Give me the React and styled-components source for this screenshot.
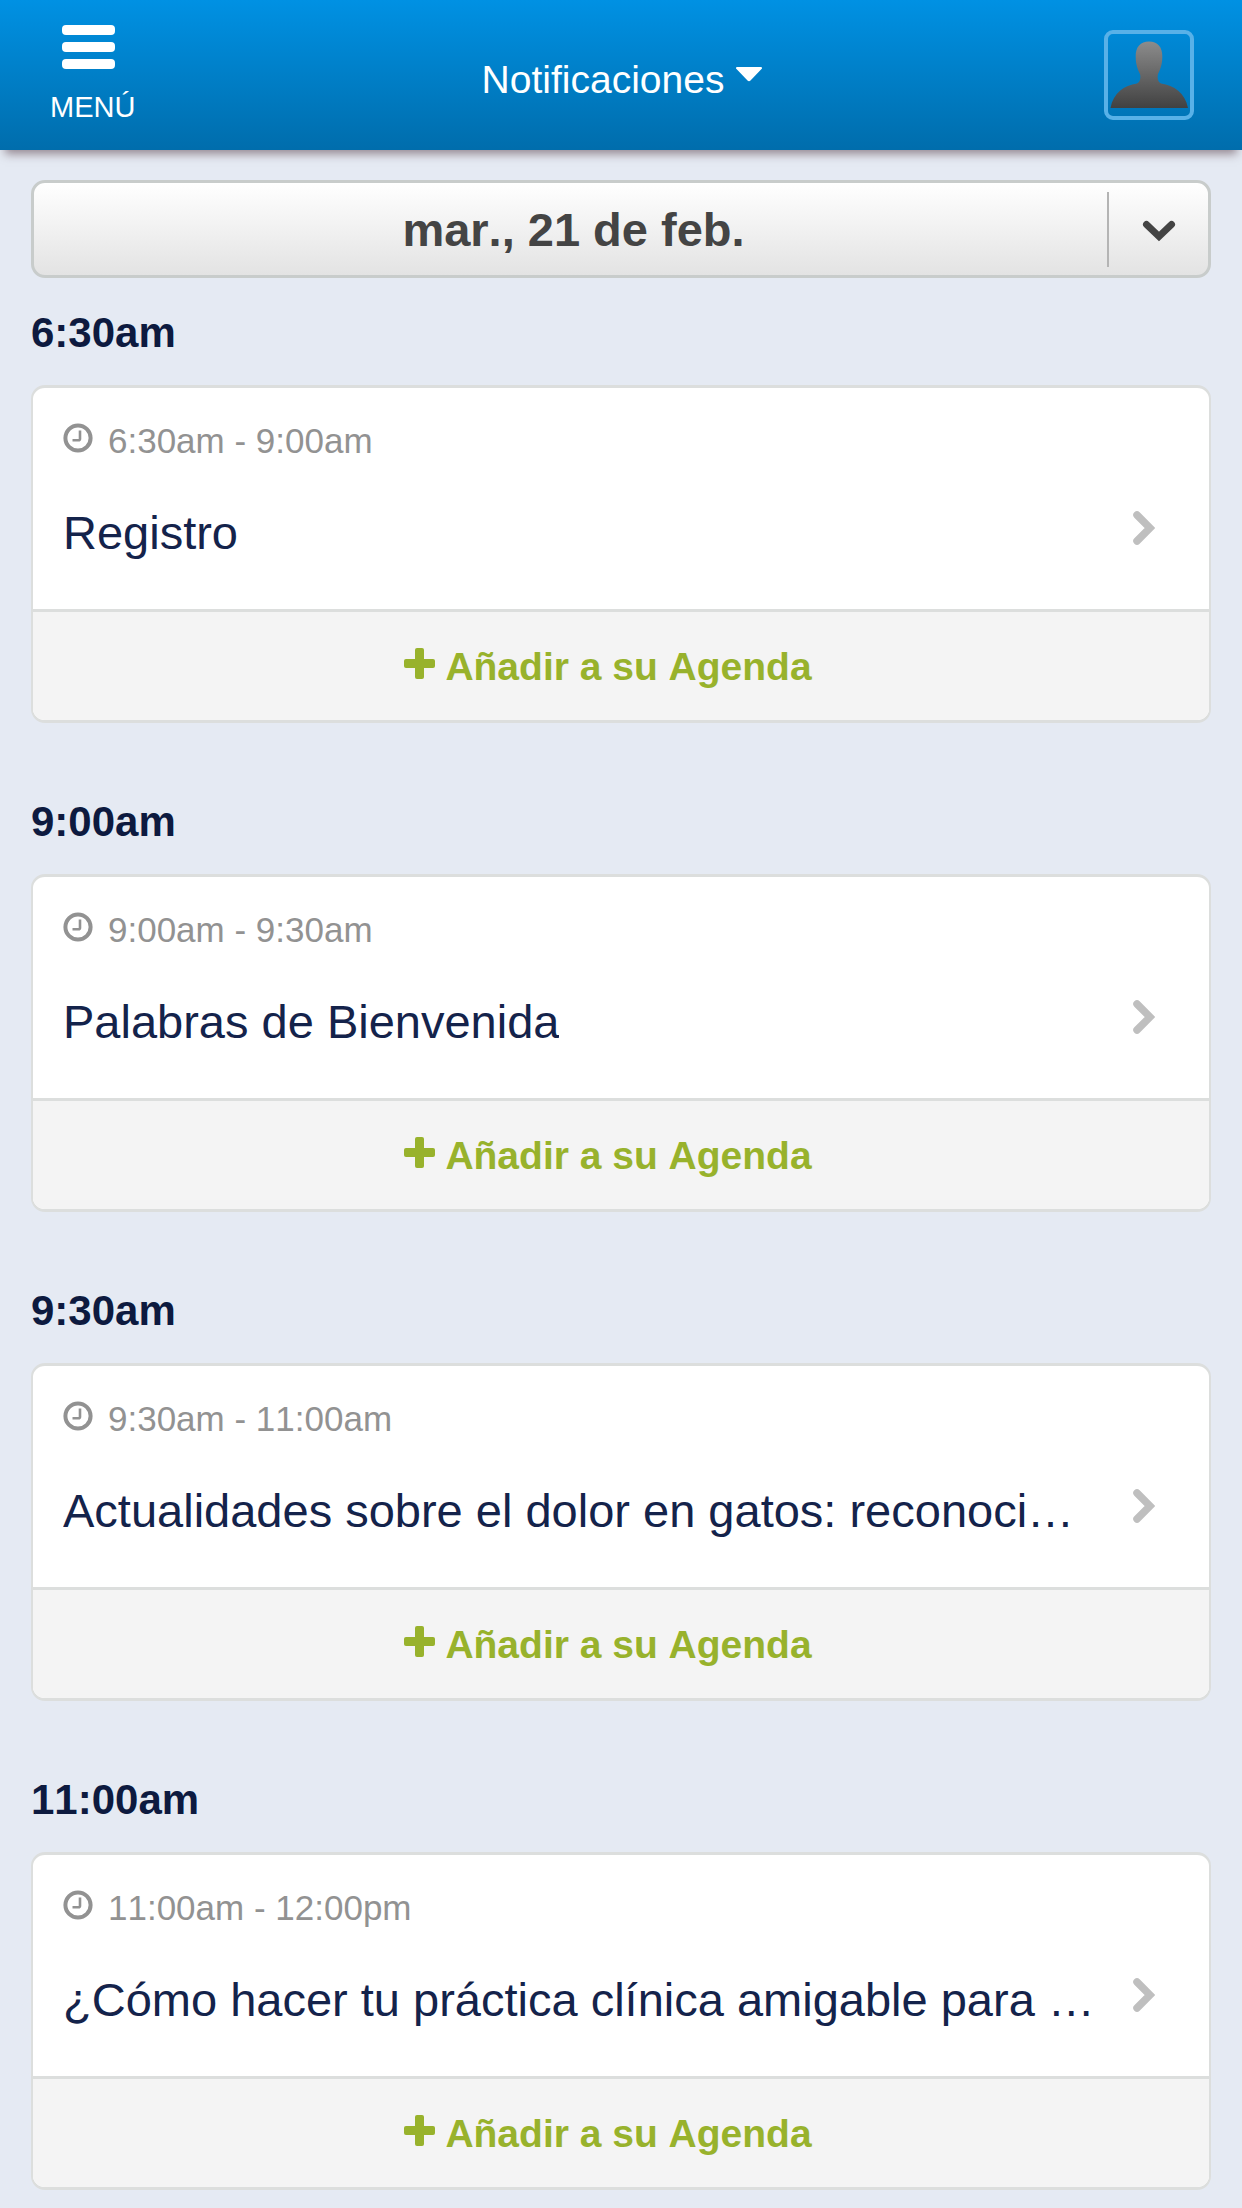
import React from "react";
import styled, { createGlobalStyle } from "styled-components";

const GlobalStyle = createGlobalStyle`
  *, *::before, *::after { box-sizing: border-box; }
  body {
    margin: 0;
    background: #e5eaf3;
    font-family: "Liberation Sans", Arial, Helvetica, sans-serif;
    font-kerning: none;
  }
  button, select { font: inherit; font-kerning: inherit; color: inherit; }
`;

const TopBar = styled.header`
  display: grid;
  grid-template-columns: 1fr auto 1fr;
  align-items: center;
  min-height: 150px;
  padding: 0 48px 0 50px;
  color: #fff;
  background: linear-gradient(#0091e3, #006dac);
  box-shadow: 0 9px 9px -5px rgba(70, 40, 50, 0.5);
`;

const MenuButton = styled.button`
  justify-self: start;
  display: flex;
  flex-direction: column;
  gap: 20px;
  padding: 0;
  border: 0;
  background: none;
  font-size: 29px;
  line-height: 36px;
  cursor: pointer;
`;

const MenuIcon = styled.svg`
  display: block;
  width: 53px;
  height: 44px;
  margin-left: 12px;
`;

const NotificationsButton = styled.button`
  display: flex;
  align-items: flex-start;
  gap: 12px;
  padding: 10px 0 0;
  border: 0;
  background: none;
  font-size: 39px;
  line-height: 48px;
  cursor: pointer;
`;

const CaretIcon = styled.svg`
  width: 26px;
  height: 40px;
`;

const AvatarButton = styled.button`
  justify-self: end;
  width: 90px;
  height: 90px;
  padding: 0;
  border: 4px solid #58b1e8;
  border-radius: 9px;
  background: none;
  cursor: pointer;
`;

const AvatarIcon = styled.svg`
  display: block;
  width: 82px;
  height: 82px;
`;

const Page = styled.main`
  padding: 30px 31px 18px;
`;

const DayPicker = styled.div`
  display: grid;
  margin-bottom: 31px;
`;

const DaySelect = styled.select`
  grid-area: 1 / 1;
  width: 100%;
  height: 98px;
  padding: 0 95px 0 0;
  appearance: none;
  border: 3px solid #c8cccb;
  border-radius: 14px;
  background: linear-gradient(#fff, #e3e3e3);
  color: #444;
  font-size: 47px;
  font-weight: bold;
  text-align: center;
  text-align-last: center;
  cursor: pointer;
`;

const DayArrow = styled.span`
  grid-area: 1 / 1;
  justify-self: end;
  align-self: center;
  display: flex;
  align-items: center;
  justify-content: center;
  width: 104px;
  height: 75px;
  padding: 4px 3px 0 0;
  border-left: 2px solid #b4b4b4;
  pointer-events: none;
`;

const Agenda = styled.div`
  display: flex;
  flex-direction: column;
  gap: 75px;
`;

const Slot = styled.section`
  display: flex;
  flex-direction: column;
  gap: 28px;
`;

const SlotTime = styled.h2`
  margin: 0;
  color: #0d1a3f;
  font-size: 42px;
  line-height: 48px;
`;

const Card = styled.article`
  overflow: hidden;
  border: 3px solid #dcdedd;
  border-width: 3px 2px;
  border-radius: 14px;
  background: #fff;
`;

const SessionLink = styled.a`
  display: flex;
  flex-direction: column;
  gap: 44px;
  padding: 33px 54px 48px 30px;
  text-decoration: none;
`;

const SessionHours = styled.span`
  display: flex;
  align-items: flex-start;
  gap: 15px;
  color: #929292;
  font-size: 35px;
  line-height: 40px;
`;

const ClockIcon = styled.svg`
  flex: none;
  width: 30px;
  height: 34px;
`;

const SessionRow = styled.span`
  display: flex;
  align-items: flex-start;
  justify-content: space-between;
  gap: 16px;
`;

const SessionTitle = styled.span`
  min-width: 0;
  overflow: hidden;
  color: #14234b;
  font-size: 47px;
  line-height: 56px;
  text-overflow: ellipsis;
  white-space: nowrap;
`;

const ArrowIcon = styled.svg`
  flex: none;
  width: 22px;
  height: 46px;
`;

const AddButton = styled.button`
  display: flex;
  align-items: flex-start;
  justify-content: center;
  gap: 10px;
  width: 100%;
  padding: 31px 26px 29px 0;
  border: 0;
  border-top: 3px solid #dcdedd;
  background: #f4f4f4;
  color: #98b22c;
  font-size: 39px;
  font-weight: bold;
  line-height: 48px;
  cursor: pointer;
`;

const PlusIcon = styled.svg`
  flex: none;
  width: 31px;
  height: 40px;
`;

const sessions = [
  { start: "6:30am", hours: "6:30am - 9:00am", title: "Registro" },
  { start: "9:00am", hours: "9:00am - 9:30am", title: "Palabras de Bienvenida" },
  {
    start: "9:30am",
    hours: "9:30am - 11:00am",
    title: "Actualidades sobre el dolor en gatos: reconoci…",
  },
  {
    start: "11:00am",
    hours: "11:00am - 12:00pm",
    title: "¿Cómo hacer tu práctica clínica amigable para …",
  },
];

function Session({ start, hours, title }) {
  return (
    <Slot>
      <SlotTime>{start}</SlotTime>
      <Card>
        <SessionLink href="#">
          <SessionHours>
            <ClockIcon viewBox="0 0 30 34" fill="none" stroke="currentColor" aria-hidden="true">
              <circle cx="15" cy="17" r="12.6" strokeWidth="4" />
              <path d="M17 9.500v8.200q0 1.500-1.500 1.500H9.500" strokeWidth="2.6" />
            </ClockIcon>
            {hours}
          </SessionHours>
          <SessionRow>
            <SessionTitle>{title}</SessionTitle>
            <ArrowIcon viewBox="0 0 22 46" fill="none" aria-hidden="true">
              <path d="M4 10l13 13L4 36" stroke="#bfbfbf" strokeWidth="7.5" strokeLinecap="round" />
            </ArrowIcon>
          </SessionRow>
        </SessionLink>
        <AddButton type="button">
          <PlusIcon viewBox="0 0 31 40" fill="currentColor" aria-hidden="true">
            <rect x="11" y="5" width="9" height="31" rx="2" />
            <rect x="0" y="16" width="31" height="9" rx="2" />
          </PlusIcon>
          Añadir a su Agenda
        </AddButton>
      </Card>
    </Slot>
  );
}

export default function App() {
  return (
    <>
      <GlobalStyle />
      <TopBar>
        <MenuButton type="button">
          <MenuIcon viewBox="0 0 53 44" fill="#fff" aria-hidden="true">
            <rect width="53" height="10" rx="4" />
            <rect y="17" width="53" height="10" rx="4" />
            <rect y="34" width="53" height="10" rx="4" />
          </MenuIcon>
          MENÚ
        </MenuButton>
        <NotificationsButton type="button">
          Notificaciones
          <CaretIcon viewBox="0 0 26 40" fill="#fff" aria-hidden="true">
            <path d="M1.500 11h23c1.500 0 2 1 1 2L14.500 24.500q-1.500 1.500-3 0L.5 13c-1-1-.5-2 1-2z" />
          </CaretIcon>
        </NotificationsButton>
        <AvatarButton type="button" aria-label="Perfil">
          <AvatarIcon viewBox="4 4 82 82" aria-hidden="true">
            <defs>
              <linearGradient id="bust" x1="0" y1="0" x2="0" y2="1">
                <stop offset="0" stopColor="#8c8c8c" />
                <stop offset="1" stopColor="#414141" />
              </linearGradient>
            </defs>
            <path
              fill="url(#bust)"
              d="M45 11.500c8.500 0 13.500 5.500 13.300 15 0 8-2 13-4.300 17.500-1 4 0 8 3 9.500 13 2 24 9 27 24.500H6.500C9.500 62.500 20 55.500 33 53.500c3-1.500 4-5.500 3-9.500-2.300-4.500-4.300-9.500-4.300-17.500C31.500 17 36.500 11.500 45 11.500z"
            />
          </AvatarIcon>
        </AvatarButton>
      </TopBar>
      <Page>
        <DayPicker>
          <DaySelect aria-label="Día">
            <option>mar., 21 de feb.</option>
          </DaySelect>
          <DayArrow aria-hidden="true">
            <svg width="34" height="24" viewBox="0 0 34 24" fill="none">
              <path d="M4.500 5.500L17 17.500L29.500 5.500" stroke="#444" strokeWidth="7" strokeLinecap="round" />
            </svg>
          </DayArrow>
        </DayPicker>
        <Agenda>
          {sessions.map((session) => (
            <Session key={session.start} {...session} />
          ))}
        </Agenda>
      </Page>
    </>
  );
}
